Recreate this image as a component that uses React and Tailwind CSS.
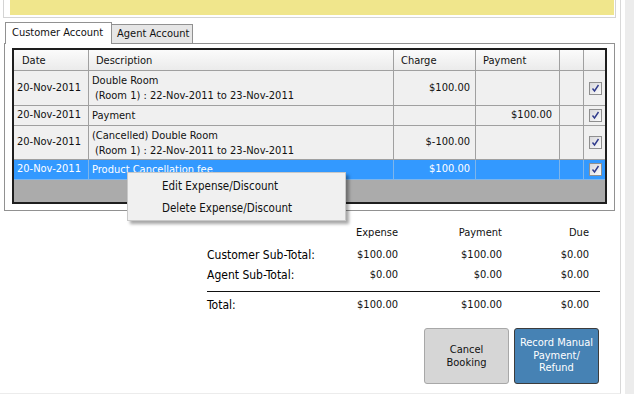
import React from "react";

const rows = [
  { date: "20-Nov-2011", desc: ["Double Room", "(Room 1) : 22-Nov-2011 to 23-Nov-2011"], charge: "$100.00", payment: "", h: "h-[35px]" },
  { date: "20-Nov-2011", desc: ["Payment"], charge: "", payment: "$100.00", h: "h-[20px]" },
  { date: "20-Nov-2011", desc: ["(Cancelled) Double Room", "(Room 1) : 22-Nov-2011 to 23-Nov-2011"], charge: "$-100.00", payment: "", h: "h-[34px]" },
  { date: "20-Nov-2011", desc: ["Product Cancellation fee"], charge: "$100.00", payment: "", h: "h-[20px]", selected: true },
];

const totals = [
  { label: "Customer Sub-Total:", expense: "$100.00", payment: "$100.00", due: "$0.00" },
  { label: "Agent Sub-Total:", expense: "$0.00", payment: "$0.00", due: "$0.00" },
];

const cols = "grid grid-cols-[75px_305px_82px_84px_24px_23px]";

function Check() {
  return (
    <span className="flex h-[13px] w-[13px] items-center justify-center border border-[#8f8f8f] bg-gradient-to-br from-[#d8d8dc] to-[#fbfbfb]">
      <svg width="9" height="9" viewBox="0 0 9 9">
        <path d="M1.5 4.5 L3.5 7 L7.5 1" fill="none" stroke="#2f3a8c" strokeWidth="1.4" />
      </svg>
    </span>
  );
}

function Row({ row }) {
  const line = row.selected ? "border-[#7fb5ea]" : "border-[#a0a0a0]";
  const bg = row.selected ? "bg-[#3399ff] text-white" : "bg-[#f0f0f0] text-[#111]";
  return (
    <div className={`${cols} ${row.h} ${bg} border-b ${line}`}>
      <div className={`flex items-center border-r ${line} pl-[3px]`}>{row.date}</div>
      <div className={`flex flex-col justify-center border-r ${line} pl-[3px] leading-[15px]`}>
        <span>{row.desc[0]}</span>
        {row.desc[1] && <span className="pl-[3px]">{row.desc[1]}</span>}
      </div>
      <div className={`flex items-center justify-end border-r ${line} pr-[5px]`}>{row.charge}</div>
      <div className={`flex items-center justify-end border-r ${line} pr-[7px]`}>{row.payment}</div>
      <div className={`border-r ${line}`}></div>
      <div className="flex items-center justify-center">
        <Check />
      </div>
    </div>
  );
}

export default function App() {
  return (
    <div className="flex h-[394px] w-[634px] bg-white text-[11px] text-[#111]" style={{ fontFamily: '"DejaVu Sans Condensed", "DejaVu Sans", sans-serif' }}>
      <div className="relative flex w-[621px] flex-col border-r border-[#d8d8d8] border-b border-b-[#ececec]">
        {/* banner */}
        <div className="ml-[3px] w-[613px] border-x border-b border-[#d4d4d4] pl-[6px] pr-px pb-[2px]">
          <div className="h-[15px] bg-[#f0e68c]"></div>
        </div>

        {/* tabs */}
        <div className="mt-[4px] flex items-end pl-[5px]">
          <div className="relative z-10 -mb-px flex h-[22px] w-[107px] items-center border-x border-t border-[#919191] bg-white pl-[6px]">
            Customer Account
          </div>
          <div className="flex h-[19px] w-[81px] items-center border-r border-t border-[#919191] bg-[#e6e6e6] pl-[5px] pt-px">
            Agent Account
          </div>
        </div>

        {/* panel */}
        <div className="ml-[4px] w-[611px] border border-[#919191] bg-white px-[7px] pt-[4px] pb-[6px]">
          <div className="flex flex-col border-2 border-[#1e1e1e] bg-[#ababab]">
            <div className={`${cols} h-[21px] border-b border-[#a0a0a0] bg-gradient-to-b from-[#fbfbfb] to-[#ebebeb] text-[#111]`}>
              <div className="flex items-center border-r border-[#a0a0a0] pl-[8px] pt-[2px]">Date</div>
              <div className="flex items-center border-r border-[#a0a0a0] pl-[7px] pt-[2px]">Description</div>
              <div className="flex items-center border-r border-[#a0a0a0] pl-[7px] pt-[2px]">Charge</div>
              <div className="flex items-center border-r border-[#a0a0a0] pl-[7px] pt-[2px]">Payment</div>
              <div className="border-r border-[#a0a0a0]"></div>
              <div></div>
            </div>
            {rows.map((row, i) => (
              <Row key={i} row={row} />
            ))}
            <div className="h-[22px]"></div>
          </div>
        </div>

        {/* totals */}
        <div className="ml-[207px] mt-[12px] w-[393px]">
          <div className="grid h-[20px] grid-cols-[120px_71px_104px_87px] items-center">
            <span></span>
            <span className="text-right">Expense</span>
            <span className="text-right">Payment</span>
            <span className="text-right">Due</span>
          </div>
          <div className="mt-[2px]">
            {totals.map((t) => (
              <div key={t.label} className="grid h-[20px] grid-cols-[120px_71px_104px_87px] items-center">
                <span className="text-[12px] text-black">{t.label}</span>
                <span className="text-right">{t.expense}</span>
                <span className="text-right">{t.payment}</span>
                <span className="text-right">{t.due}</span>
              </div>
            ))}
          </div>
          <div className="mt-[6px] border-t border-[#111]"></div>
          <div className="mt-[3px] grid h-[20px] grid-cols-[120px_71px_104px_87px] items-center">
            <span className="text-[12px] text-black">Total:</span>
            <span className="text-right">$100.00</span>
            <span className="text-right">$100.00</span>
            <span className="text-right">$0.00</span>
          </div>
        </div>

        {/* buttons */}
        <div className="ml-[424px] mt-[13px] flex gap-[5px]">
          <button className="flex h-[56px] w-[85px] flex-col items-center justify-center rounded-[3px] border border-[#a8a8a8] bg-[#d6d6d6] leading-[13px] text-[#111]">
            <span>Cancel</span>
            <span>Booking</span>
          </button>
          <button className="flex h-[56px] w-[85px] flex-col items-center justify-center rounded-[3px] border border-[#3c3c3c] bg-[#4682b4] leading-[12.5px] text-white">
            <span>Record Manual</span>
            <span>Payment/</span>
            <span>Refund</span>
          </button>
        </div>

        {/* context menu */}
        <div className="absolute left-[127px] top-[172px] flex w-[219px] flex-col border border-[#c8c8c8] bg-[#f0f0f0] pt-[3px] text-[11.5px] shadow-[3px_3px_3px_rgba(0,0,0,0.35)]">
          <div className="flex h-[22px] items-center pl-[34px]">Edit Expense/Discount</div>
          <div className="flex h-[22px] items-center pl-[34px]">Delete Expense/Discount</div>
        </div>
      </div>
      <div className="ml-[4px] flex-1 bg-[#ececec]"></div>
    </div>
  );
}
